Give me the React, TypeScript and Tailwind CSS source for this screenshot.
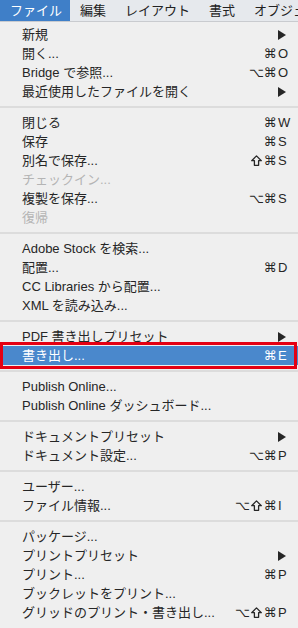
import React from "react";

type Item =
  | { sep: true }
  | { label: string; mods?: string[]; k?: string; sub?: boolean; disabled?: boolean; active?: boolean; sep?: false };

const items: Item[] = [
  { label: "新規", sub: true },
  { label: "開く...", mods: ["⌘"], k: "O" },
  { label: "Bridge で参照...", mods: ["⌥", "⌘"], k: "O" },
  { label: "最近使用したファイルを開く", sub: true },
  { sep: true },
  { label: "閉じる", mods: ["⌘"], k: "W" },
  { label: "保存", mods: ["⌘"], k: "S" },
  { label: "別名で保存...", mods: ["⇧", "⌘"], k: "S" },
  { label: "チェックイン...", disabled: true },
  { label: "複製を保存...", mods: ["⌥", "⌘"], k: "S" },
  { label: "復帰", disabled: true },
  { sep: true },
  { label: "Adobe Stock を検索..." },
  { label: "配置...", mods: ["⌘"], k: "D" },
  { label: "CC Libraries から配置..." },
  { label: "XML を読み込み..." },
  { sep: true },
  { label: "PDF 書き出しプリセット", sub: true },
  { label: "書き出し...", mods: ["⌘"], k: "E", active: true },
  { sep: true },
  { label: "Publish Online..." },
  { label: "Publish Online ダッシュボード..." },
  { sep: true },
  { label: "ドキュメントプリセット", sub: true },
  { label: "ドキュメント設定...", mods: ["⌥", "⌘"], k: "P" },
  { sep: true },
  { label: "ユーザー..." },
  { label: "ファイル情報...", mods: ["⌥", "⇧", "⌘"], k: "I" },
  { sep: true },
  { label: "パッケージ..." },
  { label: "プリントプリセット", sub: true },
  { label: "プリント...", mods: ["⌘"], k: "P" },
  { label: "ブックレットをプリント..." },
  { label: "グリッドのプリント・書き出し...", mods: ["⌥", "⇧", "⌘"], k: "P" },
];

const font = { fontFamily: '"Liberation Sans", "Noto Sans CJK JP", sans-serif' };
const symFont = { fontFamily: '"DejaVu Sans", sans-serif' };

function Arrow({ white }: { white?: boolean }) {
  return (
    <svg width="8" height="10" viewBox="0 0 8 10" className="mr-[2px]">
      <polygon points="0,0 8,5 0,10" fill={white ? "#fff" : "#262626"} />
    </svg>
  );
}

// shift key: outlined up arrow
function Shift() {
  return (
    <span className="flex w-[14px] justify-center">
      <svg width="11" height="11" viewBox="0 0 11 11">
        <polygon
          points="5.5,0.9 10.3,5.7 7.6,5.7 7.6,10.3 3.4,10.3 3.4,5.7 0.7,5.7"
          fill="none"
          stroke="currentColor"
          strokeWidth="1.3"
          strokeLinejoin="round"
        />
      </svg>
    </span>
  );
}

function Row({ item }: { item: Exclude<Item, { sep: true }> }) {
  const color = item.active ? "text-white" : item.disabled ? "text-[#b4b4b4]" : "text-[#262626]";
  return (
    <div className={`relative flex h-[19px] items-center justify-between pl-[22px] pr-[10px] text-[13px] ${color} ${item.active ? "bg-[#4a88cc]" : ""}`}>
      <span className="whitespace-nowrap">{item.label}</span>
      {item.mods && (
        <div className="flex items-center">
          {item.mods.map((m, i) =>
            m === "⇧" ? (
              <Shift key={i} />
            ) : (
              <span key={i} className="w-[14px] text-center text-[13px]" style={symFont}>
                {m}
              </span>
            )
          )}
          <span className="w-[11px] pl-[1px]">{item.k}</span>
        </div>
      )}
      {item.sub && <Arrow white={item.active} />}
      {item.active && (
        <div className="pointer-events-none absolute left-0 right-[1px] top-[-4px] bottom-[-4px] border-[3px] border-[#e50012]" />
      )}
    </div>
  );
}

export default function App() {
  return (
    <div className="h-[628px] w-[298px] overflow-hidden bg-[#efefef]" style={font}>
      <div className="flex h-[22px] items-center overflow-hidden border-b border-[#c9cbcf] bg-[#e6e9ed] text-[13px] text-[#222]">
        <div className="flex h-full w-[70px] shrink-0 items-center bg-[#3f7fc8] pl-[10px] text-white">ファイル</div>
        <div className="ml-[10px] flex shrink-0 gap-[19px] whitespace-nowrap">
          <span>編集</span>
          <span>レイアウト</span>
          <span>書式</span>
          <span>オブジェクト</span>
        </div>
      </div>
      <div className="pt-[3px]">
        {items.map((it, i) =>
          it.sep ? (
            <div key={i} className="flex h-[12px] items-center">
              <div className="h-[2px] w-full bg-[#dcdcdc]" />
            </div>
          ) : (
            <Row key={i} item={it} />
          )
        )}
      </div>
    </div>
  );
}
